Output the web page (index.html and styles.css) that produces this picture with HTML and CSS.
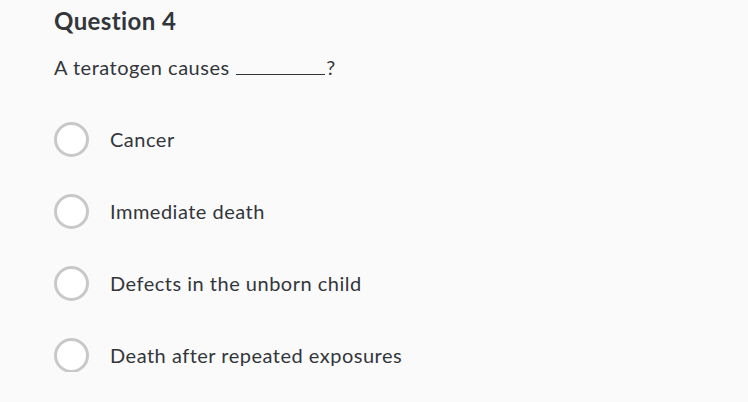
FILE: index.html
```html
<!DOCTYPE html>
<html>
<head>
<meta charset="utf-8">
<link rel="stylesheet" href="styles.css">
</head>
<body>
<div class="page">
  <h1 class="title">Question 4</h1>
  <p class="prompt">A teratogen causes <span class="blank"></span>?</p>
  <ul class="options">
    <li class="option"><span class="radio"></span><span class="label">Cancer</span></li>
    <li class="option"><span class="radio"></span><span class="label">Immediate death</span></li>
    <li class="option"><span class="radio"></span><span class="label">Defects in the unborn child</span></li>
    <li class="option"><span class="radio"></span><span class="label">Death after repeated exposures</span></li>
  </ul>
</div>
</body>
</html>
```
FILE: styles.css
```css
html, body {
  margin: 0;
  padding: 0;
  background: #fafafa;
}
.page {
  padding: 6px 0 0 54px;
  font-family: Lato, "Noto Sans", sans-serif;
  color: #32363a;
}
.title {
  margin: 0;
  font-size: 24px;
  font-weight: 700;
  line-height: 30px;
  letter-spacing: 0.4px;
}
.prompt {
  margin: 18px 0 0 0;
  font-size: 20px;
  line-height: 26px;
  letter-spacing: 0.5px;
}
.blank {
  display: inline-block;
  width: 89px;
  border-bottom: 1.5px solid #32363a;
  margin-left: 1px;
  margin-right: 1px;
}
.options {
  list-style: none;
  margin: 42px 0 0 0;
  padding: 0;
  display: flex;
  flex-direction: column;
  gap: 38px;
}
.option {
  display: flex;
  align-items: center;
  height: 34px;
}
.radio {
  width: 29px;
  height: 29px;
  border: 3px solid #c8c8c8;
  border-radius: 50%;
  background: #fff;
  flex: none;
}
.label {
  margin-left: 21px;
  font-size: 20px;
  letter-spacing: 0.5px;
}
```
